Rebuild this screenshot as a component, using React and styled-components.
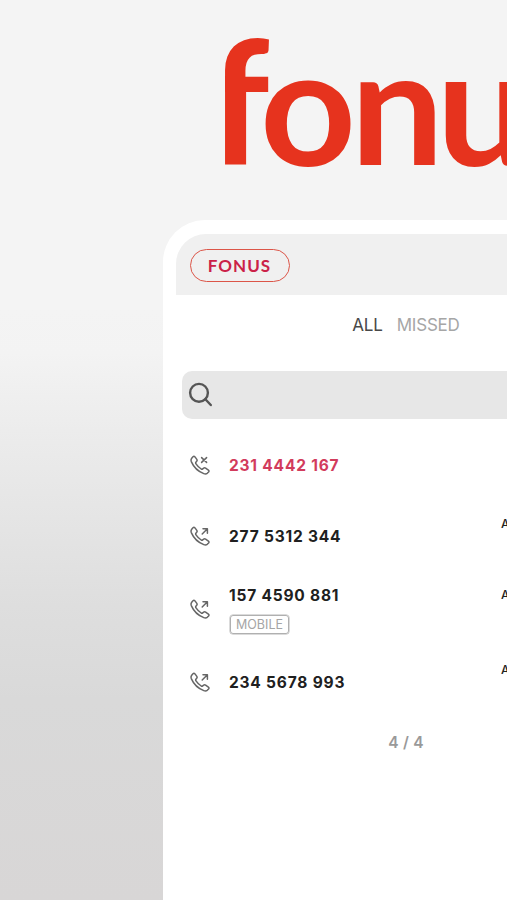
import styled, { createGlobalStyle } from "styled-components";

const GlobalStyle = createGlobalStyle`
  * {
    box-sizing: border-box;
  }
  html, body {
    margin: 0;
    padding: 0;
    overflow: hidden;
  }
  body {
    font-family: Inter, "Liberation Sans", sans-serif;
  }
`

const Page = styled.div`
  width: 100vw;
  height: 900px;
  overflow: hidden;
  display: flex;
  flex-direction: column;
  background: linear-gradient(
    180deg,
    #f4f4f4 0, #f4f4f4 310px, #f3f3f3 353px, #ececec 430px,
    #e6e6e6 505px, #dedede 605px, #d9d9d9 700px, #d8d6d6 900px
  );
`
const LogoArea = styled.header`
  height: 220px;
  flex-shrink: 0;
  svg{
    display: block;
  }
  text{
    font-family: Lato, sans-serif;
    font-weight: 700;
    font-size: 164px;
    fill: #e6331e;
  }
`
const Phone = styled.main`
  width: 486px;
  height: 900px;
  flex-shrink: 0;
  margin-left: 163px;
  padding: 14px 13px;
  border-radius: 42px 42px 0 0;
  background-color: #fff;
`
const TopBar = styled.div`
  height: 61px;
  padding: 15px 14px;
  display: flex;
  align-items: flex-start;
  border-radius: 30px 30px 0 0;
  background-color: #f0f0f0;
`
const Brand = styled.span`
  width: 100px;
  height: 33px;
  display: flex;
  justify-content: center;
  border: 1.4px solid #dc5548;
  border-radius: 17px;
  color: #cb2148;
  font-family: Lato, sans-serif;
  font-size: 17px;
  line-height: 31px;
  font-weight: 700;
  letter-spacing: 1px;
  padding-right: 1px;
`
const Tabs = styled.nav`
  height: 76px;
  padding-top: 19px;
  display: flex;
  justify-content: center;
  gap: 14px;
`
const Tab = styled.span`
  font-size: 17px;
  line-height: 23px;
  letter-spacing: -0.2px;
  color: ${(props) => (props.$active ? "#484848" : "#a6a6a6")};
`
const SearchBar = styled.div`
  height: 48px;
  margin: 0 6px;
  padding-left: 6px;
  display: flex;
  align-items: center;
  border-radius: 10px;
  background-color: #e7e7e7;
`
const Calls = styled.div`
  padding: 10px 6px 0 14px;
`
const Row = styled.div`
  height: ${(props) => props.$height}px;
  display: flex;
  align-items: center;
  > svg{
    flex-shrink: 0;
    margin-right: 18px;
  }
`
const Caller = styled.div`
  width: 272px;
  padding-top: 2px;
  display: flex;
  flex-direction: column;
  align-items: flex-start;
  gap: 9px;
`
const Number = styled.span`
  font-size: 15.5px;
  line-height: 20px;
  font-weight: 700;
  letter-spacing: 0.8px;
  white-space: nowrap;
  color: ${(props) => (props.$missed ? "#d23b5c" : "#202020")};
`
const Badge = styled.span`
  height: 19px;
  margin-left: 1px;
  padding: 0 5px;
  border: 1.5px solid #b0b0b0;
  box-shadow: 0 0 0 0.5px #b8b8b8;
  border-radius: 3px;
  color: #a5a5a5;
  font-size: 12.5px;
  line-height: 18px;
`
const Time = styled.span`
  align-self: flex-start;
  padding-top: 16px;
  font-size: 12px;
  line-height: 16px;
  font-weight: 500;
  color: #222;
`
const Counter = styled.p`
  margin: 15px 0 0;
  text-align: center;
  font-size: 15.5px;
  line-height: 20px;
  font-weight: 600;
  letter-spacing: 0.2px;
  color: #999;
`

const calls = [
  { number: "231 4442 167", missed: true, height: 71 },
  { number: "277 5312 344", height: 71, time: "A" },
  { number: "157 4590 881", height: 75, label: "MOBILE", time: "A" },
  { number: "234 5678 993", height: 72, time: "A" },
]

const Logo = () => (
  <svg width="507" height="220">
    <clipPath id="stem">
      <rect x="225" y="30" width="60" height="140" />
    </clipPath>
    <g clipPath="url(#stem)">
      <text transform="translate(208.5 165) scale(1.04 1.05)">f</text>
    </g>
    <text transform="translate(260 165.5) scale(1.02 0.99)">o</text>
    <text transform="translate(350.5 165) scale(1.01 0.98)">n</text>
    <text transform="translate(436.5 165.5) scale(1.01 0.99)">u</text>
  </svg>
)

const CallIcon = ({ missed }) => (
  <svg width="21" height="20" viewBox="0 0 21 20" fill="none" stroke="#666" strokeWidth="1.5" strokeLinecap="round" strokeLinejoin="round">
    <path d="M1.7 3.2L3 1.7Q4 .8 5 1.9L6.8 4.4Q7.5 5.4 6.7 6.3L5.9 7.2Q5.4 8 6 8.8Q8.2 12 11.2 14Q12 14.5 12.7 13.9L13.7 13.1Q14.6 12.5 15.6 13.2L18.4 15.2Q19.4 16 18.6 17L17.2 18.3Q15.8 19.4 13.8 18.6Q5 15.2 1.3 6.6Q.6 4.6 1.7 3.2Z" />
    {missed ? (
      <path d="M11.6 2.6L16.6 7.4M16.6 2.6L11.6 7.4" />
    ) : (
      <path d="M12.2 8L17.4 2.8M13 2.8H17.4V7.2" />
    )}
  </svg>
)

const SearchIcon = () => (
  <svg width="26" height="26" viewBox="0 0 26 26" fill="none" stroke="#555" strokeWidth="2.4" strokeLinecap="round">
    <circle cx="11" cy="10.8" r="8.9" />
    <path d="M17.4 17.2L22.8 23" />
  </svg>
)

export default function App() {
  return (
    <Page>
      <GlobalStyle />
      <LogoArea>
        <Logo />
      </LogoArea>
      <Phone>
        <TopBar>
          <Brand>FONUS</Brand>
        </TopBar>
        <Tabs>
          <Tab $active>ALL</Tab>
          <Tab>MISSED</Tab>
        </Tabs>
        <SearchBar>
          <SearchIcon />
        </SearchBar>
        <Calls>
          {calls.map((call) => (
            <Row key={call.number} $height={call.height}>
              <CallIcon missed={call.missed} />
              <Caller>
                <Number $missed={call.missed}>{call.number}</Number>
                {call.label && <Badge>{call.label}</Badge>}
              </Caller>
              {call.time && <Time>{call.time}</Time>}
            </Row>
          ))}
        </Calls>
        <Counter>4 / 4</Counter>
      </Phone>
    </Page>
  )
}
